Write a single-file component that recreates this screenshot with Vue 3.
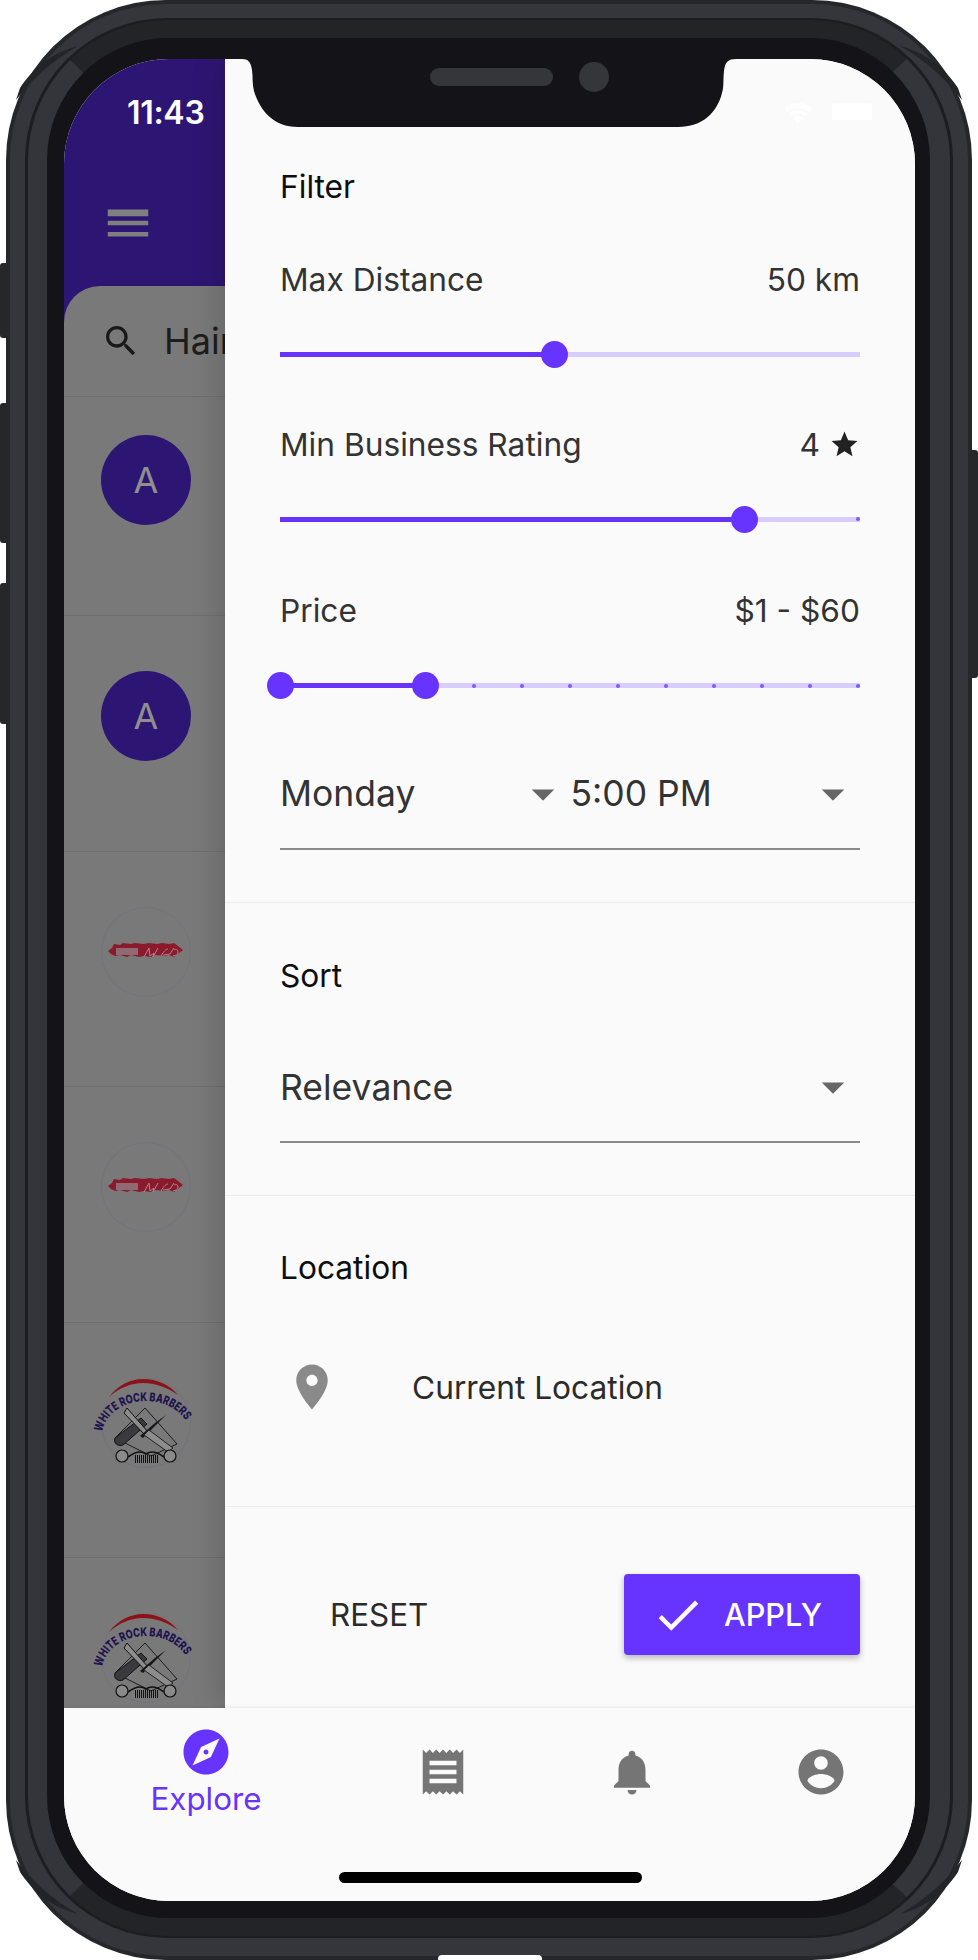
<script setup>
const rows = [
  { id: 1, kind: 'letter' },
  { id: 2, kind: 'letter' },
  { id: 3, kind: 'brush' },
  { id: 4, kind: 'brush' },
  { id: 5, kind: 'barber' },
  { id: 6, kind: 'barber' },
]

const priceTicks = [4, 5, 6, 7, 8, 9, 10, 11, 12]
// ticks are inset 2px from both ends of the track
const tickLeft = (k) => `calc(${(k / 12) * 100}% - ${(k / 12) * 4 - 2}px)`
const arcId = (id) => 'logo-arc-' + id
const barcode = [0, 1, 2, 3, 4, 5, 6, 7, 8, 9, 10, 11]
</script>

<template>
  <div class="device">
    <span class="side-btn mute"></span>
    <span class="side-btn vol-up"></span>
    <span class="side-btn vol-down"></span>
    <span class="side-btn power"></span>
    <span class="bottom-cut"></span>

    <div class="ring-a">
      <div class="ring-b">
        <div class="ring-c">
          <div class="screen">
            <div class="main">
              <!-- dimmed page behind the drawer -->
              <div class="behind">
                <div class="appbar">
                  <div class="time">11:43</div>
                  <svg class="menu-icon" viewBox="0 0 24 24"><path d="M3 18h18v-2H3v2zm0-5h18v-2H3v2zm0-6v2h18V6H3z"/></svg>
                </div>
                <div class="card">
                  <div class="searchbar">
                    <svg class="search-icon" viewBox="0 0 24 24"><path d="M15.5 14h-.79l-.28-.27C15.41 12.59 16 11.11 16 9.5 16 5.91 13.09 3 9.5 3S3 5.91 3 9.5 5.91 16 9.5 16c1.61 0 3.09-.59 4.23-1.57l.27.28v.79l5 4.99L20.49 19l-4.99-5zm-6 0C7.01 14 5 11.99 5 9.5S7.01 5 9.5 5 14 7.01 14 9.5 11.99 14 9.5 14z"/></svg>
                    <span class="search-text">Haircut</span>
                  </div>
                  <div v-for="(r, i) in rows" :key="r.id" class="row" :class="{ first: i === 0 }">
                    <div v-if="r.kind === 'letter'" class="avatar letter">A</div>
                    <div v-else-if="r.kind === 'brush'" class="avatar logo">
                      <svg viewBox="0 0 90 90" width="90" height="90">
                        <path class="brush" d="M7 44l4-3 2-4 6 1 3-2 8 1 4-1 9 1 5-1 8 1 5-1 7 1 5-1 4 3 5 4-4 3-5 4-5-2-5 1-8-1-5 2-7-1-5 1-8-2-4 2-7-2-5 1-4-2z"/>
                        <rect x="15" y="41" width="22" height="7" class="mark"/>
                        <path class="scrawl" d="M43 50l5-9 1 8 4-3-1 4 5-9M60 49c3-5 5-7 7-7M62 48l7-1 4-6M72 49c3-1 5-1 5-4s-3-3-4-2"/>
                      </svg>
                    </div>
                    <div v-else class="avatar logo">
                      <svg class="barber" viewBox="0 0 90 90" width="90" height="90">
                        <path d="M8 19C17 7 30 1 42 1c14 0 27 6 35 16C66 9 54 5 42 5 30 5 18 10 8 19z" fill="#8c1218"/>
                        <path :id="arcId(r.id)" d="M1 55C4 35 24 23 45 23s41 12 44 32" fill="none"/>
                        <text class="logo-text"><textPath :href="'#' + arcId(r.id)" startOffset="1" textLength="104" lengthAdjust="spacingAndGlyphs">WHITE ROCK BARBERS</textPath></text>
                        <path d="M44 30L76 66 50 78 14 60z" fill="none" stroke="#1b1b1f" stroke-width="1"/>
                        <path d="M14 60L40 40l6 6-24 21c-5 2-10-2-8-7z" fill="#3a3a3e" stroke="#111" stroke-width="1"/>
                        <path d="M26 30l21 24-3 3-21-22z" fill="#8d8d8d" stroke="#111" stroke-width="1"/>
                        <path d="M65 37L42 60l-3-2 15-13z" fill="#15151a"/>
                        <path d="M48 52l24 18-5 4-24-17z" fill="#8d8d8d" stroke="#222" stroke-width="1"/>
                        <circle cx="21" cy="78" r="6" fill="#8a8a8a" stroke="#111" stroke-width="1.2"/>
                        <circle cx="69" cy="78" r="6" fill="#8a8a8a" stroke="#111" stroke-width="1.2"/>
                        <path d="M27 79c8-6 14-6 18-3 4-3 10-3 18 3" fill="none" stroke="#111" stroke-width="1.6"/>
                        <rect v-for="b in barcode" :key="b" :x="34 + b * 2" y="77" width="1" height="8" fill="#111"/>
                      </svg>
                    </div>
                  </div>
                </div>
              </div>

              <!-- filter drawer -->
              <aside class="drawer">
                <section class="filter">
                  <div class="heading">Filter</div>

                  <div class="label-row first-label">
                    <span>Max Distance</span><span>50 km</span>
                  </div>
                  <div class="slider one">
                    <div class="track"></div>
                    <div class="track active" style="left: 0; width: 47.4%"></div>
                    <span class="thumb" style="left: 47.4%"></span>
                  </div>

                  <div class="label-row">
                    <span>Min Business Rating</span>
                    <span class="rating">4
                      <svg class="star" viewBox="0 0 24 24"><path d="M12 17.27L18.18 21l-1.64-6.96L22 9.24l-7.19-.61L12 2 9.19 8.63 2 9.24l5.46 4.8L5.82 21z"/></svg>
                    </span>
                  </div>
                  <div class="slider two">
                    <div class="track"></div>
                    <div class="track active" style="left: 0; width: 80%"></div>
                    <span class="tick" :style="{ left: tickLeft(12) }"></span>
                    <span class="thumb" style="left: 80%"></span>
                  </div>

                  <div class="label-row price-row">
                    <span>Price</span><span>$1 - $60</span>
                  </div>
                  <div class="slider three">
                    <div class="track"></div>
                    <div class="track active" style="left: 0; width: 25%"></div>
                    <span v-for="k in priceTicks" :key="k" class="tick" :style="{ left: tickLeft(k) }"></span>
                    <span class="thumb" style="left: 0"></span>
                    <span class="thumb" style="left: 25%"></span>
                  </div>

                  <div class="select-row">
                    <div class="select-part day">
                      <span>Monday</span>
                      <svg class="arrow" viewBox="0 0 24 24"><path d="M7 10l5 5 5-5z"/></svg>
                    </div>
                    <div class="select-part hour">
                      <span>5:00 PM</span>
                      <svg class="arrow" viewBox="0 0 24 24"><path d="M7 10l5 5 5-5z"/></svg>
                    </div>
                  </div>
                </section>

                <section class="sort">
                  <div class="heading">Sort</div>
                  <div class="select-row single">
                    <span>Relevance</span>
                    <svg class="arrow" viewBox="0 0 24 24"><path d="M7 10l5 5 5-5z"/></svg>
                  </div>
                </section>

                <section class="location">
                  <div class="heading">Location</div>
                  <div class="place">
                    <svg class="pin" viewBox="0 0 24 24"><path d="M12 2C8.13 2 5 5.13 5 9c0 5.25 7 13 7 13s7-7.75 7-13c0-3.87-3.13-7-7-7zm0 9.5c-1.38 0-2.5-1.12-2.5-2.5s1.12-2.5 2.5-2.5 2.5 1.12 2.5 2.5-1.12 2.5-2.5 2.5z"/></svg>
                    <span>Current Location</span>
                  </div>
                </section>

                <section class="actions">
                  <button class="btn-reset">RESET</button>
                  <button class="btn-apply">
                    <svg class="check" viewBox="0 0 24 24"><path d="M9 16.17L4.83 12l-1.42 1.41L9 19 21 7l-1.41-1.41z"/></svg>
                    APPLY
                  </button>
                </section>
              </aside>
            </div>

            <nav class="bottom-nav">
              <div class="nav-item active">
                <svg viewBox="0 0 24 24"><path d="M12 10.9c-.61 0-1.1.49-1.1 1.1s.49 1.1 1.1 1.1c.61 0 1.1-.49 1.1-1.1s-.49-1.1-1.1-1.1zM12 2C6.48 2 2 6.48 2 12s4.48 10 10 10 10-4.48 10-10S17.52 2 12 2zm2.19 12.19L6 18l3.81-8.19L18 6l-3.81 8.19z"/></svg>
                <span>Explore</span>
              </div>
              <div class="nav-item">
                <svg viewBox="0 0 24 24"><path d="M18 17H6v-2h12v2zm0-4H6v-2h12v2zm0-4H6V7h12v2zM3 22l1.5-1.5L6 22l1.5-1.5L9 22l1.5-1.5L12 22l1.5-1.5L15 22l1.5-1.5L18 22l1.5-1.5L21 22V2l-1.5 1.5L18 2l-1.5 1.5L15 2l-1.5 1.5L12 2l-1.5 1.5L9 2 7.5 3.5 6 2 4.5 3.5 3 2v20z"/></svg>
              </div>
              <div class="nav-item">
                <svg viewBox="0 0 24 24"><path d="M12 22c1.1 0 2-.9 2-2h-4c0 1.1.89 2 2 2zm6-6v-5c0-3.07-1.64-5.64-4.5-6.32V4c0-.83-.67-1.5-1.5-1.5s-1.5.67-1.5 1.5v.68C7.63 5.36 6 7.92 6 11v5l-2 2v1h16v-1l-2-2z"/></svg>
              </div>
              <div class="nav-item">
                <svg viewBox="0 0 24 24"><path d="M12 2C6.48 2 2 6.48 2 12s4.48 10 10 10 10-4.48 10-10S17.52 2 12 2zm0 3c1.66 0 3 1.34 3 3s-1.34 3-3 3-3-1.34-3-3 1.34-3 3-3zm0 14.2c-2.5 0-4.71-1.28-6-3.22.03-1.99 4-3.08 6-3.08 1.99 0 5.97 1.09 6 3.08-1.29 1.94-3.5 3.22-6 3.22z"/></svg>
              </div>
            </nav>

            <div class="home-bar"></div>

            <!-- notch and status icons sit over everything -->
            <svg class="notch" viewBox="0 0 500 70" width="500" height="70">
              <path d="M0 0h494c-8 0-11 3-12 12-1 10 0 16-2 22-5 20-20 34-44 34H56C32 68 18 52 12 32 10 25 11 18 10 11 9 3 6 0 0 0z" fill="#141418"/>
              <rect x="188" y="9" width="123" height="18" rx="9" fill="#35363a"/>
              <circle cx="352" cy="18" r="15" fill="#35363a"/>
            </svg>
            <svg class="wifi" viewBox="0 0 30 24" width="30" height="24">
              <path d="M15 24l-5-6a8 8 0 0 1 10 0z" fill="#fff"/>
              <path d="M1 8a22 22 0 0 1 28 0l-3 4a17 17 0 0 0-22 0z" fill="#fff"/>
              <path d="M6 13a15 15 0 0 1 18 0l-2.500 3a11 11 0 0 0-13 0z" fill="#fff"/>
            </svg>
            <div class="battery"></div>
          </div>
        </div>
      </div>
    </div>

    <!-- dark wedges where the metal bands meet at the corners -->
    <svg class="wedges" viewBox="0 0 978 1960" width="978" height="1960">
      <path d="M900 46c25 6 45 22 58 42l4 12c-17-22-37-40-62-54z"/>
      <path transform="matrix(-1 0 0 1 978 0)" d="M900 46c25 6 45 22 58 42l4 12c-17-22-37-40-62-54z"/>
      <path transform="matrix(1 0 0 -1 0 1960)" d="M900 46c25 6 45 22 58 42l4 12c-17-22-37-40-62-54z"/>
      <path transform="matrix(-1 0 0 -1 978 1960)" d="M900 46c25 6 45 22 58 42l4 12c-17-22-37-40-62-54z"/>
    </svg>
  </div>
</template>

<style>
html, body { margin: 0; background: #fff; }
</style>

<style scoped>
.device {
  position: relative;
  box-sizing: border-box;
  width: 966px;
  height: 1960px;
  margin-left: 6px;
  padding: 4px;
  background: #26272b;
  border-radius: 160px;
  font-family: Inter, Roboto, sans-serif;
}
.wedges {
  position: absolute;
  left: -6px;
  top: 0;
  fill: #232428;
  pointer-events: none;
}
.ring-a {
  box-sizing: border-box;
  height: 100%;
  padding: 14px 15px 18px;
  background: #35363b;
  border-radius: 156px;
}
.ring-b {
  box-sizing: border-box;
  height: 100%;
  padding: 2px 3px;
  background: #1c1d20;
  border-radius: 142px;
}
.ring-c {
  box-sizing: border-box;
  height: 100%;
  padding: 21px 15px 16px 17px;
  background: #141418;
  border-style: solid;
  border-width: 18px 20px 18px 19px;
  border-color: #232428 #34353a #232428 #34353a;
  border-radius: 140px;
}
.screen {
  position: relative;
  display: flex;
  flex-direction: column;
  width: 851px;
  height: 1842px;
  background: #fafafa;
  border-radius: 105px;
  overflow: hidden;
}
.main {
  display: flex;
  height: 1649px;
}

/* page behind the drawer */
.behind {
  width: 161px;
  flex-shrink: 0;
  background: #2d1673;
  overflow: hidden;
}
.appbar {
  height: 227px;
  padding: 37px 0 0 63px;
  box-sizing: border-box;
}
.time {
  color: #fff;
  font-size: 32px;
  font-weight: 600;
  line-height: 34px;
  letter-spacing: -0.3px;
}
.menu-icon {
  display: block;
  width: 54px;
  height: 54px;
  margin: 66px 0 0 -26px;
  fill: #7f7f7f;
}
.card {
  height: 1422px;
  background: #797979;
  border-top-left-radius: 36px;
  overflow: hidden;
}
.searchbar {
  display: flex;
  align-items: center;
  box-sizing: border-box;
  height: 111px;
  padding: 0 0 0 37px;
  border-bottom: 1px solid #6e6e6e;
  white-space: nowrap;
}
.search-icon {
  width: 40px;
  height: 40px;
  flex-shrink: 0;
  fill: #191919;
}
.search-text {
  margin-left: 23px;
  font-size: 36px;
  color: #1d1d1d;
}
.row {
  box-sizing: border-box;
  height: 235.500px;
  padding: 55px 0 0 37px;
  border-bottom: 1px solid #6e6e6e;
}
.row.first {
  height: 219px;
  padding-top: 38px;
}
.avatar {
  display: flex;
  align-items: center;
  justify-content: center;
  width: 90px;
  height: 90px;
  border-radius: 50%;
}
.avatar.letter {
  background: #2d1673;
  color: #8f8f8f;
  font-size: 36px;
}
.avatar.logo {
  box-shadow: inset 0 0 0 1px #73737c;
}
.brush { fill: #8a1a2c; }
.mark { fill: #8f6a72; }
.scrawl { fill: none; stroke: #a98a90; stroke-width: 1; }
.barber { overflow: visible; }
.logo-text {
  font-size: 12px;
  font-weight: 800;
  fill: #20124f;
}

/* drawer */
.drawer {
  position: relative;
  z-index: 1;
  flex: 1;
  display: flex;
  flex-direction: column;
  background: #fafafa;
  box-shadow: 0 0 30px rgba(0, 0, 0, 0.22);
  color: #2b2b2b;
}
.drawer section {
  box-sizing: border-box;
  padding: 0 55px;
  border-bottom: 1px solid #ececec;
}
.filter { height: 844px; padding-top: 108px !important; }
.sort { height: 293px; padding-top: 53px !important; }
.location { height: 311px; padding-top: 52px !important; }
.heading {
  font-size: 31.700px;
  line-height: 40px;
  color: #0e0e0e;
}
.label-row {
  display: flex;
  justify-content: space-between;
  align-items: center;
  margin-top: 43.500px;
  font-size: 31.700px;
  line-height: 40px;
  color: #333;
}
.label-row.first-label { margin-top: 53px; }
.label-row.price-row { margin-top: 45.500px; }
.rating { display: flex; align-items: center; gap: 9px; }
.star { width: 31px; height: 31px; fill: #222; }
.slider {
  position: relative;
  height: 54px;
  margin-top: 27px;
}
.slider.one + .label-row { margin-top: 43.500px; }
.track {
  position: absolute;
  left: 0;
  right: 0;
  top: 25px;
  height: 5px;
  background: #d9ccff;
}
.track.active { background: #6733ff; }
.thumb {
  position: absolute;
  top: 14px;
  width: 27px;
  height: 27px;
  margin-left: -13.500px;
  border-radius: 50%;
  background: #6733ff;
}
.tick {
  position: absolute;
  top: 25.500px;
  width: 4px;
  height: 4px;
  margin-left: -2px;
  border-radius: 50%;
  background: #8057ff;
}
.select-row {
  display: flex;
  box-sizing: border-box;
  height: 78px;
  margin-top: 60px;
  border-bottom: 2px solid #8a8a8a;
  font-size: 35.500px;
  line-height: 44px;
  color: #333;
}
.select-part {
  display: flex;
  justify-content: space-between;
}
.select-part.day { width: 290px; }
.select-part.hour { width: 289.500px; margin-left: 0.500px; }
.arrow {
  width: 54px;
  height: 54px;
  margin: -5px 0 0;
  fill: #666;
}
.select-row.single {
  justify-content: space-between;
  margin-top: 69px;
}
.single span { margin-top: 1px; }
.place {
  display: flex;
  align-items: center;
  margin-top: 72px;
  font-size: 31.700px;
  color: #2b2b2b;
}
.pin {
  width: 54px;
  height: 54px;
  margin: 0 73px 0 5px;
  fill: #8a8a8a;
}
.drawer .actions {
  flex: 1;
  display: flex;
  justify-content: space-between;
  align-items: flex-start;
  padding-top: 67px;
  border-bottom: 0;
}
.btn-reset, .btn-apply {
  font-family: inherit;
  border: 0;
  background: none;
  padding: 0;
  height: 81px;
}
.btn-reset {
  margin-left: 50px;
  font-size: 31.400px;
  color: #2b2b2b;
}
.btn-apply {
  display: flex;
  align-items: center;
  box-sizing: border-box;
  width: 236px;
  padding-left: 34px;
  gap: 25px;
  font-size: 30.600px;
  font-weight: 500;
  color: #fff;
  background: #6733ff;
  border-radius: 4px;
  box-shadow: 0 3px 6px rgba(0, 0, 0, 0.28);
}
.check { width: 54px; height: 54px; margin-left: -7px; margin-right: -6px; fill: #fff; }

/* bottom nav */
.bottom-nav {
  position: relative;
  z-index: 2;
  flex: 1;
  display: grid;
  grid-template-columns: 284px 189px 189px 189px;
  background: #fafafa;
  box-shadow: 0 -1px 3px rgba(0, 0, 0, 0.08);
}
.nav-item {
  display: flex;
  flex-direction: column;
  align-items: center;
  padding-top: 37px;
  fill: #757575;
}
.nav-item svg { width: 54px; height: 54px; }
.nav-item.active {
  padding-top: 17px;
  fill: #6733ff;
  color: #6733ff;
  font-size: 31.300px;
  line-height: 36px;
}
.nav-item.active span { margin-top: 2px; }
.home-bar {
  position: absolute;
  z-index: 3;
  left: 275px;
  bottom: 18px;
  width: 303px;
  height: 11px;
  border-radius: 6px;
  background: #000;
}
.notch {
  position: absolute;
  z-index: 4;
  top: 0;
  left: 178px;
}
.wifi {
  position: absolute;
  z-index: 4;
  left: 719px;
  top: 41px;
}
.battery {
  position: absolute;
  z-index: 4;
  left: 768px;
  top: 44px;
  width: 40px;
  height: 17px;
  border-radius: 3px;
  background: #fff;
}

/* hardware bits */
.side-btn {
  position: absolute;
  background: #26272b;
}
.mute, .vol-up, .vol-down {
  left: -6px;
  width: 6px;
  border-radius: 3px 0 0 3px;
}
.mute { top: 263px; height: 75px; }
.vol-up { top: 403px; height: 140px; }
.vol-down { top: 583px; height: 141px; }
.power {
  right: -6px;
  top: 450px;
  width: 6px;
  height: 228px;
  border-radius: 0 3px 3px 0;
}
.bottom-cut {
  position: absolute;
  left: 432px;
  bottom: 0;
  width: 104px;
  height: 5px;
  background: #fff;
  border-radius: 4px 4px 0 0;
}
</style>
